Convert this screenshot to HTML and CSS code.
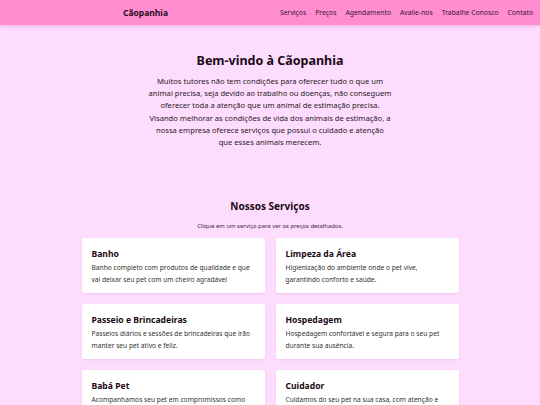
FILE: index.html
```html
<!DOCTYPE html>
<html lang="pt-BR">
<head>
<meta charset="utf-8">
<title>Cãopanhia</title>
<link rel="stylesheet" href="styles.css">
</head>
<body>
<header class="topbar">
  <div class="logo">Cãopanhia</div>
  <nav class="nav">
    <a href="#">Serviços</a>
    <a href="#">Preços</a>
    <a href="#">Agendamento</a>
    <a href="#">Avalie-nos</a>
    <a href="#">Trabalhe Conosco</a>
    <a href="#">Contato</a>
  </nav>
</header>
<main>
  <section class="intro">
    <h1>Bem-vindo à Cãopanhia</h1>
    <p>Muitos tutores não tem condições para oferecer tudo o que um animal precisa, seja devido ao trabalho ou doenças, não conseguem oferecer toda a atenção que um animal de estimação precisa. Visando melhorar as condições de vida dos animais de estimação, a nossa empresa oferece serviços que possui o cuidado e atenção que esses animais merecem.</p>
  </section>
  <section class="services">
    <h2>Nossos Serviços</h2>
    <p class="hint">Clique em um serviço para ver os preços detalhados.</p>
    <div class="grid">
      <div class="card"><h3>Banho</h3><p>Banho completo com produtos de qualidade e que vai deixar seu pet com um cheiro agradável</p></div>
      <div class="card"><h3>Limpeza da Área</h3><p>Higienização do ambiente onde o pet vive, garantindo conforto e saúde.</p></div>
      <div class="card"><h3>Passeio e Brincadeiras</h3><p>Passeios diários e sessões de brincadeiras que irão manter seu pet ativo e feliz.</p></div>
      <div class="card"><h3>Hospedagem</h3><p>Hospedagem confortável e segura para o seu pet durante sua ausência.</p></div>
      <div class="card"><h3>Babá Pet</h3><p>Acompanhamos seu pet em compromissos como consultas e passeios especiais.</p></div>
      <div class="card"><h3>Cuidador</h3><p>Cuidamos do seu pet na sua casa, com atenção e carinho em todos os momentos.</p></div>
    </div>
  </section>
</main>
</body>
</html>
```
FILE: styles.css
```css
* { box-sizing: border-box; }
html, body { margin: 0; padding: 0; }
body {
  background: #fddcfd;
  font-family: "Noto Sans", "Open Sans", sans-serif;
  color: #222;
}
.topbar {
  height: 25px;
  background: #ff8dd0;
  display: flex;
  align-items: center;
  justify-content: space-between;
  padding: 0 7px 0 123px;
  box-shadow: 0 1px 3px rgba(200, 80, 160, 0.35);
}
.logo {
  font-weight: 700;
  font-size: 8.5px;
  color: #2a0f22;
}
.nav {
  display: flex;
  gap: 9px;
}
.nav a {
  font-size: 6.8px;
  color: #3a1530;
  text-decoration: none;
}
.intro {
  text-align: center;
  padding-top: 27px;
}
.intro h1 {
  margin: 0 0 6px;
  font-size: 12.5px;
  font-weight: 700;
  color: #1a0a14;
}
.intro p {
  margin: 0 auto;
  width: 243px;
  font-size: 7.6px;
  line-height: 12.2px;
  color: #2a1a24;
}
.services {
  text-align: center;
  padding-top: 51px;
}
.services h2 {
  margin: 0;
  font-size: 10px;
  font-weight: 700;
  color: #1a0a14;
}
.hint {
  margin: 9px 0 8px;
  font-size: 5.9px;
  color: #3a2a34;
}
.grid {
  width: 377px;
  margin: 0 auto;
  display: grid;
  grid-template-columns: 1fr 1fr;
  gap: 11px;
  text-align: left;
}
.card {
  background: #fff;
  border-radius: 2px;
  height: 55px;
  padding: 10px 10px;
  box-shadow: 0 1px 2px rgba(180, 100, 160, 0.15);
}
.card h3 {
  margin: 0 0 2px;
  font-size: 8.6px;
  font-weight: 700;
  color: #1a0a14;
}
.card p {
  margin: 0;
  font-size: 6.65px;
  line-height: 12px;
  color: #333;
}
```
